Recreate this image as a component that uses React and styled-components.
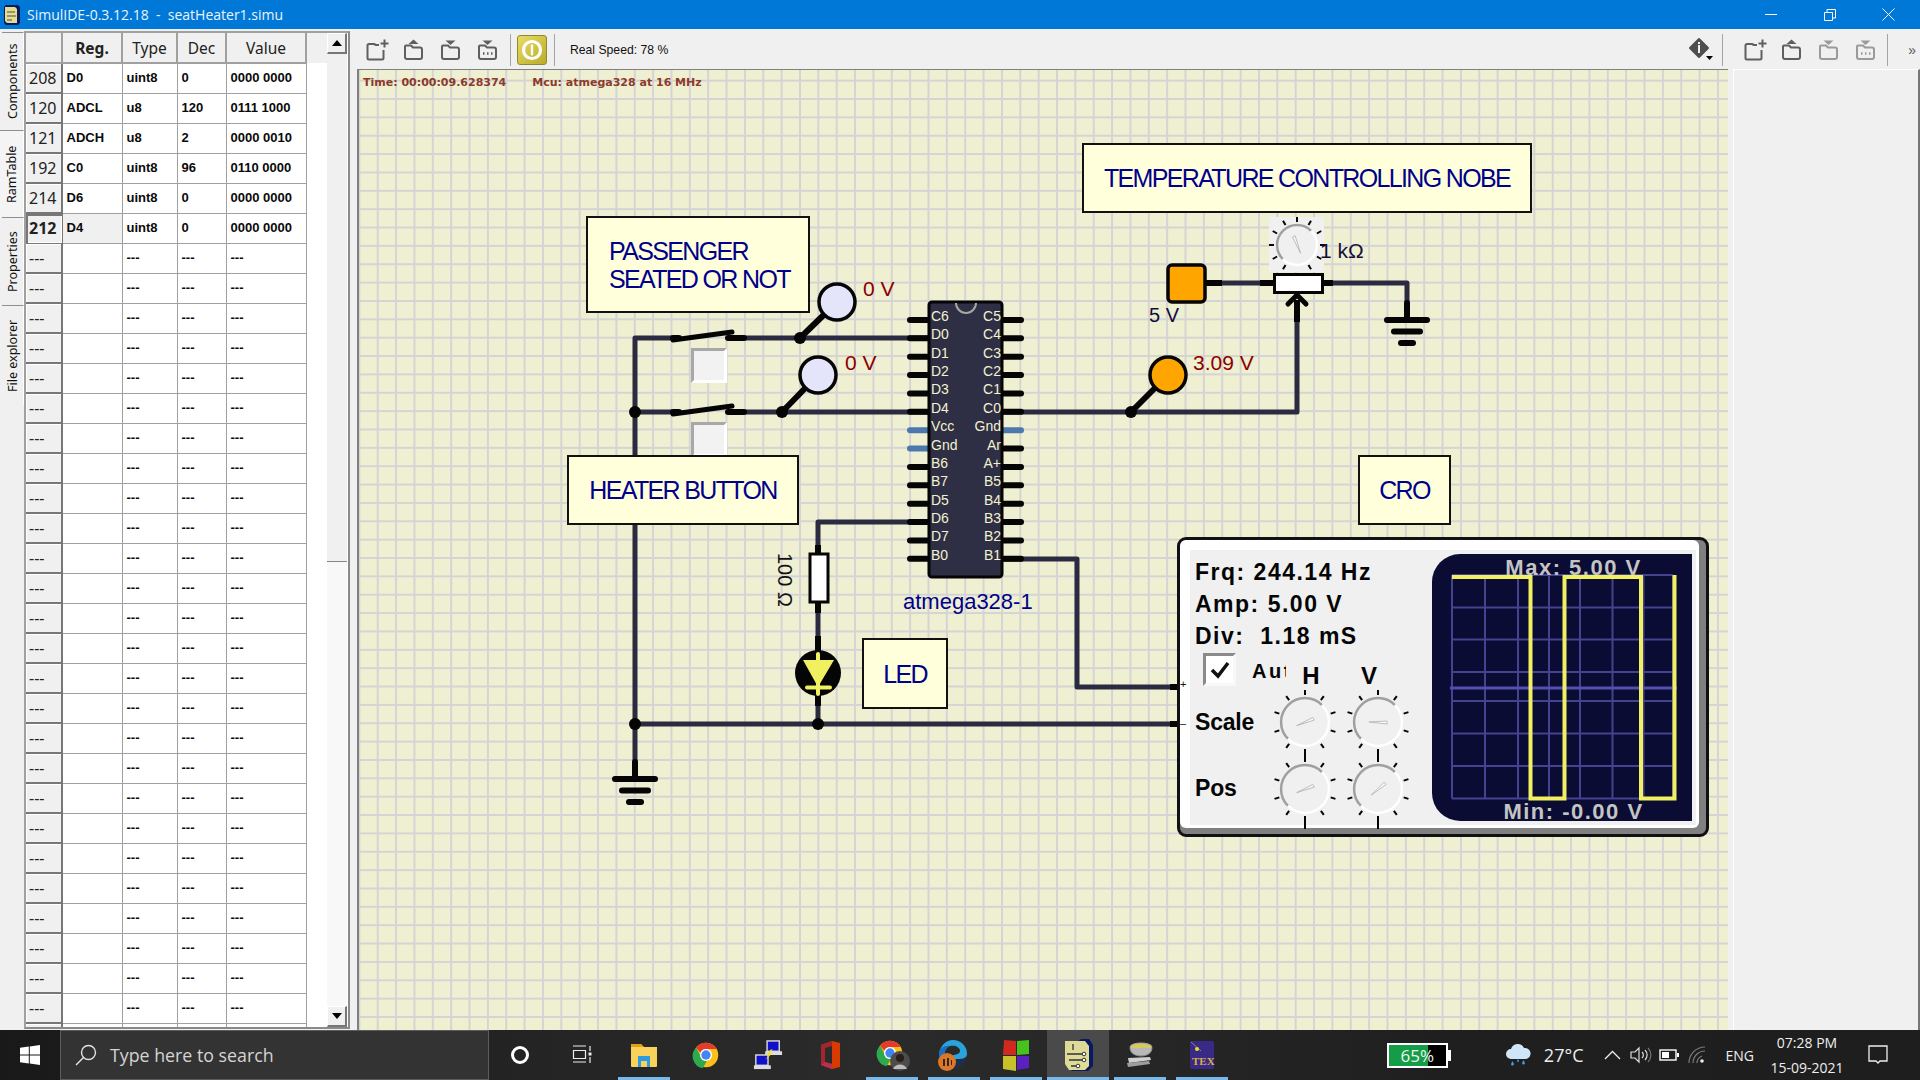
import React from "react";
import styled, { createGlobalStyle } from "styled-components";

const GlobalStyle = createGlobalStyle`
  html, body { margin: 0; padding: 0; height: 100%; overflow: hidden; background: #f0f0f0; }
  body { font-family: "Liberation Sans", Arial, sans-serif; }
  * { box-sizing: border-box; }
`;

/* canvas origin in page coordinates, nodes are given in page pixels */
const CX = 357;
const CY = 70;

const Screen = styled.div`
  width: 1920px;
  height: 1080px;
  display: flex;
  flex-direction: column;
  overflow: hidden;
`;

const TitleBar = styled.div`
  height: 29px;
  flex: none;
  background: #0078d7;
  display: flex;
  align-items: center;
  color: #fff;
  padding-left: 3px;
`;

const TitleText = styled.span`
  font-family: "Open Sans", sans-serif;
  font-size: 14px;
  margin-left: 6px;
  white-space: pre;
  color: #eaf4fc;
`;

const WindowButtons = styled.div`
  margin-left: auto;
  display: flex;
  align-items: center;
  height: 100%;
  margin-right: 2px;
`;

const WindowButton = styled.div`
  width: 59px;
  height: 100%;
  display: flex;
  align-items: center;
  justify-content: center;
`;

const Main = styled.div`
  flex: 1;
  display: flex;
  min-height: 0;
`;

const SidePanel = styled.div`
  width: 357px;
  flex: none;
  display: flex;
  background: #f0f0f0;
`;

const DockTabs = styled.div`
  width: 24px;
  flex: none;
  padding-top: 3px;
  display: flex;
  flex-direction: column;
`;

const DockTab = styled.div`
  height: ${({ $h }) => $h}px;
  width: ${({ $active }) => ($active ? 24 : 22)}px;
  margin-left: ${({ $active }) => ($active ? 0 : 2)}px;
  background: ${({ $active }) => ($active ? "#f4f4f4" : "#f0f0f0")};
  border-left: 1px solid #fff;
  border-bottom: 1px solid #8f8f8f;
  display: flex;
  align-items: center;
  justify-content: center;
  writing-mode: vertical-rl;
  transform: rotate(180deg);
  font-family: "Noto Sans", sans-serif;
  font-size: 12.5px;
  color: #111;
`;

const DockFrame = styled.div`
  width: 326px;
  margin: 2px 0 1px 0;
  border: 2px solid #fff;
  border-left-color: #a0a0a0;
  border-top-color: #a0a0a0;
  border-right-color: #8a8a8a;
  border-bottom-color: #8a8a8a;
  display: flex;
  background: #fff;
`;

const TableClip = styled.div`
  width: 301px;
  overflow: hidden;
  background: linear-gradient(#f0f0f0 30px, #fff 30px);
`;

const RamGrid = styled.table`
  border-collapse: collapse;
  table-layout: fixed;
  width: 280px;
  font-size: 13px;
  background: #fff;
`;

const HeadCell = styled.th`
  height: 30px;
  background: #f0f0f0;
  border: 1px solid #a0a0a0;
  border-top: none;
  border-left: none;
  box-shadow: inset -1px -1px 0 #a0a0a0;
  font-family: "Noto Sans", sans-serif;
  font-size: 15.5px;
  color: #222;
  font-weight: ${({ $bold }) => ($bold ? 700 : 400)};
  padding: 0;
`;

const RowHead = styled.td`
  height: 30px;
  padding: 0 0 0 3px;
  background: #f0f0f0;
  border: 1px solid #777;
  border-top-color: #a0a0a0;
  border-left: none;
  box-shadow: ${({ $cur }) => ($cur ? "inset 2px 2px 0 #777, inset -1px -1px 0 #fff" : "inset -1px -1px 0 #777, inset 1px 1px 0 #fff")};
  font-family: "Noto Sans", sans-serif;
  font-size: 16px;
  font-weight: ${({ $cur }) => ($cur ? 700 : 400)};
  color: #222;
`;

const Cell = styled.td`
  height: 30px;
  padding: 0 0 2px 4px;
  border: 1px solid #a0a0a0;
  font-weight: 700;
  font-size: 13px;
  color: #0a0a0a;
  background: ${({ $cur }) => ($cur ? "#f0f0f0" : "#fff")};
  white-space: nowrap;
`;

const ScrollBar = styled.div`
  width: 20px;
  flex: none;
  display: flex;
  flex-direction: column;
  background: #f0f0f0;
`;

const ScrollButton = styled.div`
  height: 21px;
  flex: none;
  background: #f0f0f0;
  border: 1px solid #fff;
  border-right: 2px solid #777;
  border-bottom: 2px solid #777;
  display: flex;
  align-items: center;
  justify-content: center;
`;

const ScrollThumb = styled.div`
  height: 508px;
  flex: none;
  background: #f0f0f0;
  border-bottom: 1px solid #888;
`;

const ScrollTrack = styled.div`
  flex: 1;
  background-color: #f8f8f8;
  background-image: radial-gradient(#e4e4e4 0.5px, transparent 0.6px);
  background-size: 2px 2px;
`;

const Workspace = styled.div`
  flex: 1;
  display: flex;
  flex-direction: column;
  min-width: 0;
`;

const ToolBar = styled.div`
  height: 40px;
  flex: none;
  background: #f0f0f0;
  display: flex;
  align-items: center;
  padding: 1px 0 0 1px;
`;

const ToolIcon = styled.div`
  width: 37px;
  height: 30px;
  flex: none;
  display: flex;
  align-items: center;
  justify-content: center;
`;

const ToolSep = styled.div`
  width: 1px;
  height: 32px;
  flex: none;
  background: #a4a4a4;
  margin: ${({ $m }) => $m || "0"};
`;

const PowerButton = styled.div`
  width: 30px;
  height: 30px;
  flex: none;
  margin: 0 7px 0 6px;
  border-radius: 3px;
  border: 1px solid #8f8a30;
  background: linear-gradient(135deg, #e9dc62, #b9ab2a);
  display: flex;
  align-items: center;
  justify-content: center;
`;

const SpeedLabel = styled.span`
  font-size: 12.200px;
  margin-left: 15px;
  color: #111;
`;

const OverflowMark = styled.span`
  font-size: 14px;
  margin: 0 4px 0 20px;
  color: #555;
`;

const ToolSpacer = styled.div`
  flex: 1;
`;

const WorkRow = styled.div`
  flex: 1;
  display: flex;
  min-height: 0;
`;

const Canvas = styled.div`
  position: relative;
  width: 1371px;
  flex: none;
  overflow: hidden;
  border-top: 1px solid #808080;
  background-color: #efefd2;
  background-image:
    linear-gradient(to right, #d5d3d3 2px, transparent 2px),
    linear-gradient(to bottom, #d5d3d3 2px, transparent 2px);
  background-size: 18.37px 18.37px;
  background-position: 1.4px 9.7px;
  box-shadow: inset 2px 0 0 #808080;
`;

const RightColumn = styled.div`
  flex: 1;
  background: #f0f0f0;
  padding: 0 0 0 5px;
`;

const RightPane = styled.div`
  height: 100%;
  background: #f0f0f0;
  border-top: 1px solid #fff;
  border-left: 1px solid #fff;
  border-right: 2px solid #777;
`;

const StatusLine = styled.div`
  position: absolute;
  left: 6px;
  top: 6px;
  display: flex;
  gap: 26px;
  font-family: "DejaVu Sans", sans-serif;
  font-weight: 700;
  font-size: 11px;
  color: #8c3a2a;
  white-space: nowrap;
`;

const Wiring = styled.svg`
  position: absolute;
  left: 0;
  top: 0;
`;

const Note = styled.div`
  position: absolute;
  left: ${({ $x }) => $x - CX}px;
  top: ${({ $y }) => $y - CY}px;
  width: ${({ $w }) => $w}px;
  height: ${({ $h }) => $h}px;
  background: #ffffdc;
  border: 2px solid #111;
  color: #00008b;
  font-size: 25px;
  line-height: 28px;
  letter-spacing: -1.65px;
  padding-left: ${({ $pad }) => $pad || 0}px;
  display: flex;
  flex-direction: column;
  justify-content: center;
  align-items: ${({ $pad }) => ($pad ? "flex-start" : "center")};
  white-space: nowrap;
`;

const SwitchKey = styled.div`
  position: absolute;
  left: ${691 - CX}px;
  top: ${({ $y }) => $y - CY}px;
  width: 36px;
  height: 35px;
  background: #f2f2f2;
  border: 3px solid #fff;
  border-top-color: #a8a8a8;
  border-left-color: #a8a8a8;
`;

const ScopeFrame = styled.div`
  position: absolute;
  left: ${1177 - CX}px;
  top: ${537 - CY}px;
  width: 532px;
  height: 300px;
  border: 3px solid #111;
  border-radius: 9px;
  background: #808080;
  padding: 0 7px 6px 0;
`;

const ScopeBody = styled.div`
  position: relative;
  height: 100%;
  background: #fff;
  border-radius: 6px;
  padding: 10px 3px 3px 10px;
`;

const ScopeInner = styled.div`
  height: 100%;
  background: #f0f0f0;
  display: flex;
  color: #050505;
  font-weight: 700;
`;

const ScopeControls = styled.div`
  width: 242px;
  flex: none;
  padding: 6px 0 0 5px;
`;

const InputMark = styled.span`
  position: absolute;
  left: 0;
  top: ${({ $y }) => $y}px;
  font-size: 11px;
  line-height: 11px;
  font-weight: 400;
  color: #111;
`;

const Readout = styled.div`
  height: 32px;
  line-height: 32px;
  font-size: 23px;
  letter-spacing: 1.5px;
  white-space: pre;
`;

const AxisRow = styled.div`
  display: flex;
  align-items: flex-start;
  height: 37px;
`;

const AutoCheck = styled.div`
  width: 33px;
  height: 33px;
  margin: 1px 0 0 8px;
  background: #fff;
  border: 3px solid #f8f8f8;
  border-top-color: #8a8a8a;
  border-left-color: #8a8a8a;
  display: flex;
  align-items: center;
  justify-content: center;
`;

const AutoLabel = styled.div`
  width: 34px;
  margin-left: 16px;
  overflow: hidden;
  font-size: 20px;
  line-height: 38px;
  letter-spacing: 2.5px;
`;

const AxisLetter = styled.div`
  width: 24px;
  margin-left: ${({ $m }) => $m}px;
  text-align: center;
  font-size: 24px;
  line-height: 48px;
`;

const KnobRow = styled.div`
  display: flex;
  align-items: center;
  height: ${({ $h }) => $h}px;
`;

const KnobLabel = styled.div`
  width: 73px;
  font-size: 23px;
  letter-spacing: -0.2px;
`;

const KnobSlot = styled.div`
  width: 73px;
  height: 66px;
  display: flex;
  align-items: center;
  justify-content: center;
`;

const ScopeScreen = styled.svg`
  flex: none;
  margin-top: 4px;
`;

const TaskBar = styled.div`
  height: 50px;
  flex: none;
  display: flex;
  align-items: stretch;
  background: linear-gradient(to right, #191919, #232323 25%, #2b2b2b 45%, #262626 60%, #1f1f1f 75%, #1e1e1e);
  color: #f0f0f0;
  position: relative;
`;

const StartButton = styled.div`
  width: 60px;
  flex: none;
  display: flex;
  align-items: center;
  justify-content: center;
`;

const SearchBox = styled.div`
  width: 429px;
  flex: none;
  background: #333;
  border: 1px solid #5c5c5c;
  display: flex;
  align-items: center;
  padding-left: 14px;
  font-family: "Open Sans", sans-serif;
  font-size: 17.8px;
  color: #d4d4d4;
  gap: 13px;
`;

const TaskSlot = styled.div`
  width: 62px;
  flex: none;
  display: flex;
  align-items: center;
  justify-content: center;
  position: relative;
  background: ${({ $focus }) => ($focus ? "#4a4a4a" : "transparent")};
  &::after {
    content: "";
    position: absolute;
    left: ${({ $focus }) => ($focus ? 0 : 5)}px;
    right: ${({ $focus }) => ($focus ? 0 : 5)}px;
    bottom: 0;
    height: 3px;
    background: ${({ $open }) => ($open ? "#76b9ed" : "transparent")};
  }
`;

const Tray = styled.div`
  margin-left: auto;
  display: flex;
  align-items: center;
  font-family: "Open Sans", sans-serif;
  padding-right: 16px;
`;

const BatteryWidget = styled.div`
  width: 61px;
  height: 25px;
  border: 2px solid #fff;
  background: linear-gradient(to right, #149c47 0 68%, #000 68%);
  display: flex;
  align-items: center;
  justify-content: center;
  font-size: 17px;
  color: #f0f8f0;
  position: relative;
  &::after {
    content: "";
    position: absolute;
    right: -5px;
    top: 5px;
    width: 3px;
    height: 11px;
    background: #fff;
  }
`;

const TrayText = styled.span`
  font-size: ${({ $s }) => $s || 14}px;
  margin: ${({ $m }) => $m || "0"};
  color: #eee;
  white-space: nowrap;
`;

const TrayIcon = styled.div`
  width: 28px;
  flex: none;
  margin: ${({ $m }) => $m || "0"};
  display: flex;
  justify-content: center;
  align-items: center;
`;

const Clock = styled.div`
  width: 90px;
  margin-left: 8px;
  text-align: center;
  font-size: 14px;
  line-height: 25px;
  color: #eee;
`;

const NotifySlot = styled.div`
  width: 52px;
  display: flex;
  justify-content: center;
`;

const BadgedIcon = styled.div`
  position: relative;
  width: 32px;
  height: 32px;
`;

const Badge = styled.svg`
  position: absolute;
  bottom: 0;
  ${({ $side }) => ($side === "left" ? "left: 0;" : "right: -2px;")}
`;

/* ---- data ---- */

const ramRows = [
  ["208", "D0", "uint8", "0", "0000 0000"],
  ["120", "ADCL", "u8", "120", "0111 1000"],
  ["121", "ADCH", "u8", "2", "0000 0010"],
  ["192", "C0", "uint8", "96", "0110 0000"],
  ["214", "D6", "uint8", "0", "0000 0000"],
  ["212", "D4", "uint8", "0", "0000 0000"],
];
const emptyRows = Array.from({ length: 26 }, () => ["---", "", "---", "---", "---"]);
// last row only peeks out below the frame
const allRows = [...ramRows, ...emptyRows, ["", "", "", "", ""]];

const leftPins = ["C6", "D0", "D1", "D2", "D3", "D4", "Vcc", "Gnd", "B6", "B7", "D5", "D6", "D7", "B0"];
const rightPins = ["C5", "C4", "C3", "C2", "C1", "C0", "Gnd", "Ar", "A+", "B5", "B4", "B3", "B2", "B1"];
const pinY = (i) => 320 + i * 18.37;

const WIRE = "#2a2a40";
const INK = "#050505";

/* ---- drawings ---- */

function Folder({ kind, color = "#5f5f5f" }) {
  return (
    <svg width="24" height="24" viewBox="0 0 24 24" fill="none" stroke={color} strokeWidth="2" strokeLinejoin="round">
      {kind === "new" ? (
        <>
          <path d="M14 7h-3l-2-1H4a1.500 1.500 0 0 0-1.500 1.500V20a1.500 1.500 0 0 0 1.500 1.500h13a1.500 1.500 0 0 0 1.500-1.500V12" />
          <path d="M19.500 1.500v8M15.500 5.500h8" />
        </>
      ) : (
        <path d="M4 8h5l2 2h7a2 2 0 0 1 2 2v7.500a2 2 0 0 1-2 2H5a2 2 0 0 1-2-2V9a1 1 0 0 1 1-1z" transform="translate(0 -.5)" />
      )}
      {kind === "open" && <path d="M11.500 1.500l5 4.500h-10z" fill={color} stroke="none" />}
      {(kind === "save" || kind === "saveas") && <path d="M11.500 7l5-4.500h-10z" fill={color} stroke="none" />}
      {kind === "saveas" && <path d="M7 15.500h1.500M11 15.500h1.500M15 15.500h1.500" strokeWidth="2.400" />}
    </svg>
  );
}

function Ground({ x, y }) {
  return (
    <g stroke={INK} strokeLinecap="round">
      <path d={`M${x} ${y - 17}V${y}`} strokeWidth="6" />
      <path d={`M${x - 20} ${y}h40`} strokeWidth="6" />
      <path d={`M${x - 13} ${y + 11.5}h26`} strokeWidth="6" />
      <path d={`M${x - 6} ${y + 23}h12`} strokeWidth="6" />
    </g>
  );
}

function Probe({ x, y, cx, cy, fill }) {
  return (
    <g>
      <path d={`M${x} ${y}L${cx} ${cy}`} stroke={INK} strokeWidth="6" />
      <circle cx={x} cy={y} r="6" fill={INK} />
      <circle cx={cx} cy={cy} r="18" fill={fill} stroke={INK} strokeWidth="3.5" />
    </g>
  );
}

function Switch({ y }) {
  return (
    <g stroke={INK} strokeLinecap="round">
      <path d={`M673 ${y + 2}L732 ${y - 6}`} strokeWidth="5" />
      <path d={`M673 ${y}h6`} strokeWidth="6" />
      <path d={`M728 ${y}h16`} strokeWidth="6" />
    </g>
  );
}

function KnobTicks({ r, angles, long }) {
  return angles.map((a) => {
    const t = (a * Math.PI) / 180;
    const s = Math.sin(t);
    const c = -Math.cos(t);
    const end = long && a === 180 ? r + 16 : r + 8;
    return <line key={a} x1={s * (r + 3)} y1={c * (r + 3)} x2={s * end} y2={c * end} stroke={INK} strokeWidth="2" />;
  });
}

function KnobFace({ r, angle }) {
  const k = r * 0.7071;
  return (
    <g>
      <circle r={r} fill="#f0f0f0" />
      <path d={`M${-k} ${k}A${r} ${r} 0 0 1 ${k} ${-k}`} fill="none" stroke="#a0a0a0" strokeWidth="2.5" />
      <path d={`M${k} ${-k}A${r} ${r} 0 0 1 ${-k} ${k}`} fill="none" stroke="#fff" strokeWidth="2.5" />
      <g transform={`rotate(${angle})`}>
        <path d="M-1 9L0 -9L3 -9z" fill="#fafafa" stroke="#b4b4b4" strokeWidth=".8" />
      </g>
    </g>
  );
}

const scopeTicks = [0, 36, 72, 108, 144, 180, 216, 252, 288, 324];

function ScopeKnob({ angle }) {
  return (
    <svg width="70" height="66" viewBox="-35 -33 70 66" style={{ overflow: "visible" }}>
      <KnobTicks r={24} angles={scopeTicks} long />
      <KnobFace r={24} angle={angle} />
    </svg>
  );
}

function ScopeTrace() {
  const vs = [20, 53, 86, 117, 148, 180.5, 211.5, 241];
  const hs = [21, 53.5, 85.5, 118, 147, 179.5, 212, 244.5];
  return (
    <ScopeScreen width="260" height="267" viewBox="0 0 260 267">
      <rect x="0" y="0" width="286" height="267" rx="28" fill="#0b0c33" />
      <g stroke="#43438f" strokeWidth="2">
        {vs.map((x) => <line key={x} x1={x} x2={x} y1="21" y2="244.5" />)}
        {hs.map((y) => <line key={y} x1="20" x2="241" y1={y} y2={y} />)}
      </g>
      <line x1="18" x2="245" y1="134" y2="134" stroke="#5050b0" strokeWidth="3" />
      <g fill="#c4c4c4" fontFamily="Liberation Sans" fontWeight="700" fontSize="22" letterSpacing="1.5" textAnchor="middle">
        <text x="141.5" y="21">Max: 5.00 V</text>
        <text x="141.5" y="265">Min: -0.00 V</text>
      </g>
      <path d="M20 23H98.500V244.500H132.500V23H209V244.500H242.500V21" fill="none" stroke="#f0f060" strokeWidth="4" />
    </ScopeScreen>
  );
}

function Circuit() {
  return (
    <Wiring width="1371" height="960" viewBox={`${CX} ${CY} 1371 960`}>
      {/* dark wires */}
      <g fill="none" stroke={WIRE} strokeWidth="5" strokeLinejoin="round">
        <path d="M672 338H635V762" />
        <path d="M635 412H672" />
        <path d="M745 338H908" />
        <path d="M745 412H908" />
        <path d="M908 522H818V545" />
        <path d="M818 612V636" />
        <path d="M818 696V724" />
        <path d="M635 724H1170" />
        <path d="M1023 412H1297V322" />
        <path d="M1023 559H1077V687H1170" />
        <path d="M1222 283H1260" />
        <path d="M1333 283H1407V303" />
      </g>
      <path d="M1170 687h10M1170 724h10" stroke={INK} strokeWidth="6" />

      <Switch y={338} />
      <Switch y={412} />
      <circle cx="635" cy="412" r="6" fill={INK} />
      <circle cx="635" cy="724" r="6" fill={INK} />
      <circle cx="818" cy="724" r="6" fill={INK} />

      <Probe x={800} y={338} cx={837} cy={302} fill="#e4e4fb" />
      <Probe x={782} y={412} cx={818} cy={375} fill="#e4e4fb" />
      <Probe x={1131} y={412} cx={1168} cy={375} fill="#ffa500" />

      <g fontFamily="Liberation Sans" fontSize="21" fill="#8b0000">
        <text x="863" y="296">0 V</text>
        <text x="845" y="370">0 V</text>
        <text x="1193" y="370">3.09 V</text>
      </g>

      {/* atmega */}
      <g strokeLinecap="round" strokeWidth="6">
        {leftPins.map((p, i) => (
          <line key={p} x1="910" x2="930" y1={pinY(i)} y2={pinY(i)} stroke={p === "Vcc" || p === "Gnd" ? "#4b79ad" : INK} />
        ))}
        {rightPins.map((p, i) => (
          <line key={p} x1="1001" x2="1021" y1={pinY(i)} y2={pinY(i)} stroke={p === "Gnd" ? "#4b79ad" : INK} />
        ))}
      </g>
      <path d="M908 338h22M908 412h22M908 522h22M1001 412h22M1001 559h22" stroke={INK} strokeWidth="5" />
      <rect x="929" y="302" width="73" height="275" rx="3" fill="#2e2e44" stroke={INK} strokeWidth="3" />
      <path d="M956 303a10 10 0 0 0 20 0" fill="none" stroke="#a8a8a0" strokeWidth="2" />
      <g fontFamily="Liberation Sans" fontSize="14" fill="#f2f2d0">
        {leftPins.map((p, i) => <text key={p} x="931" y={pinY(i) + 1}>{p}</text>)}
        {rightPins.map((p, i) => <text key={p} x="1001" y={pinY(i) + 1} textAnchor="end">{p}</text>)}
      </g>
      <text x="903" y="609" fontFamily="Liberation Sans" fontSize="22" fill="#00008b">atmega328-1</text>

      {/* series resistor and led */}
      <path d="M818 545V553M818 603V613M818 636V652M818 694V706" stroke={INK} strokeWidth="6" />
      <rect x="810" y="554" width="18" height="48" fill="#fff" stroke={INK} strokeWidth="3" />
      <text transform="translate(778 553) rotate(90)" fontFamily="Liberation Sans" fontSize="20" fill="#111">100 Ω</text>
      <circle cx="818" cy="673" r="23" fill={INK} />
      <path d="M803 660H834L818 687z" fill="#f0f060" />
      <path d="M818 654V694M807 687.5H830" stroke="#f0f060" strokeWidth="4" strokeLinecap="round" />

      {/* supply and pot */}
      <rect x="1168" y="265" width="37" height="37" rx="4" fill="#ffa500" stroke={INK} strokeWidth="3.5" />
      <text x="1149" y="322" fontFamily="Liberation Sans" fontSize="20" fill="#10103a">5 V</text>
      <path d="M1206 283h16M1260 283h13M1323 283h10" stroke={INK} strokeWidth="6" />
      <rect x="1269" y="217" width="55" height="55" fill="#f0f0f0" />
      <g transform="translate(1297 245)">
        <KnobTicks r={20} angles={[0, 30, 60, 90, 120, 150, 210, 240, 270, 300, 330]} />
        <KnobFace r={20} angle={-30} />
      </g>
      <text x="1320" y="258" fontFamily="Liberation Sans" fontSize="21" fill="#10103a">1 kΩ</text>
      <rect x="1274.5" y="274.5" width="48" height="18" fill="#fff" stroke={INK} strokeWidth="3" />
      <path d="M1297 322V300" stroke={INK} strokeWidth="6" />
      <path d="M1288 304L1297 295L1306 304" fill="none" stroke={INK} strokeWidth="5" strokeLinecap="round" strokeLinejoin="round" />

      <Ground x={1407} y={320} />
      <Ground x={635} y={779} />
    </Wiring>
  );
}

function TitleLogo() {
  return (
    <svg width="18" height="22" viewBox="0 0 18 22">
      <path d="M3 1h12l2 2v16l-2 2H3L1 19V3z" fill="#0a1a60" />
      <path d="M2 3h10l2 2v14H4l-2-2z" fill="#e3dd90" />
      <path d="M4 8h8M4 12h9M4 16h5" stroke="#4a4a4a" strokeWidth="1" />
    </svg>
  );
}

function ChromeIcon() {
  return (
    <svg width="28" height="28" viewBox="0 0 24 24">
      <circle cx="12" cy="12" r="10.5" fill="#fbc116" />
      <path d="M12 1.500A10.500 10.500 0 0 1 21.100 6.800H12a5.200 5.200 0 0 0-4.800 3.200L3.500 5.800A10.500 10.500 0 0 1 12 1.500z" fill="#e33b2e" />
      <path d="M3.500 5.800l3.900 7a5.200 5.200 0 0 0 5.300 4.300l-3.500 6.300A10.500 10.500 0 0 1 3.500 5.800z" fill="#2da94f" />
      <circle cx="12" cy="12" r="5.2" fill="#fff" />
      <circle cx="12" cy="12" r="4" fill="#4286f5" />
    </svg>
  );
}

function ExplorerIcon() {
  return (
    <svg width="28" height="26" viewBox="0 0 28 26">
      <path d="M1 2h10l3 3h13v19a1 1 0 0 1-1 1H2a1 1 0 0 1-1-1z" fill="#f9d25c" />
      <path d="M1 2h10l2 3H1z" fill="#e2a20f" />
      <path d="M8 14h12v11h-3v-6h-6v6H8z" fill="#2f9ae0" />
    </svg>
  );
}

function NetworkIcon() {
  return (
    <svg width="30" height="32" viewBox="0 0 32 34">
      <rect x="15" y="2" width="13" height="11" fill="#1010c8" stroke="#ddd" strokeWidth="1.5" />
      <rect x="13" y="13" width="18" height="4" fill="#ddd" />
      <rect x="3" y="17" width="13" height="11" fill="#1010c8" stroke="#ddd" strokeWidth="1.5" />
      <rect x="1" y="28" width="18" height="4" fill="#ddd" />
      <path d="M19 11l-5 6 3 0-4 5 8-7-3 0 3-4z" fill="#f4e020" />
    </svg>
  );
}

function OfficeIcon() {
  return (
    <svg width="24" height="30" viewBox="0 0 24 30">
      <path d="M14 1L3 5v20l11 4 8-2V3z" fill="#d83b01" />
      <path d="M3 5l11-4v5L7 8v14l7 2v5L3 25z" fill="#a4262c" />
      <path d="M7 8l7-2v18l-7-2z" fill="#2b2b2b" />
      <path d="M3 25l4-3 7 2v5z" fill="#b7314f" />
    </svg>
  );
}

function ProfileChrome() {
  return (
    <BadgedIcon>
      <ChromeIcon />
      <Badge width="20" height="20" viewBox="0 0 20 20">
        <circle cx="10" cy="10" r="10" fill="#4c4c4c" />
        <circle cx="10" cy="7" r="4" fill="#2a1c18" />
        <path d="M3 18c2-6 12-6 14 0z" fill="#bcbcbc" />
      </Badge>
    </BadgedIcon>
  );
}

function EdgeIcon() {
  return (
    <BadgedIcon>
      <svg width="30" height="30" viewBox="0 0 30 30">
        <path d="M15 1a14 14 0 0 1 14 14c0 4-4 5-9 5h-8c0-6 10-3 10-8C22 8 17 6 12 7 6 8 2 12 1 15 2 7 8 1 15 1z" fill="#2aa3dc" />
        <path d="M1 15c0-6 6-9 11-8-4 2-6 6-5 11 1 6 6 10 11 11C9 30 1 24 1 15z" fill="#1b6fc0" />
        <path d="M12 20h16c-1 5-5 9-10 9-4-1-7-5-6-9z" fill="#1f2e4a" />
      </svg>
      <Badge $side="left" width="18" height="18" viewBox="0 0 18 18">
        <circle cx="9" cy="9" r="9" fill="#d9782a" />
        <path d="M5 6h2v7H5zM9 5h2v8H9zM13 7h1v5h-1z" fill="#3c2414" />
      </Badge>
    </BadgedIcon>
  );
}

function ColorTiles() {
  return (
    <svg width="28" height="34" viewBox="0 0 28 34">
      <path d="M2 2l12 1v14H1z" fill="#d02a20" />
      <path d="M15 3l12-1v14l-12 1z" fill="#46c11e" />
      <path d="M1 18h13v15l-13-2z" fill="#c8c22a" />
      <path d="M15 18h12v12l-12 2z" fill="#5a20c0" />
    </svg>
  );
}

function SimulIcon() {
  return (
    <svg width="30" height="34" viewBox="0 0 30 34">
      <path d="M18 1h8l4 6v21l-5 5H8l6-4V4z" fill="#0a1a60" />
      <path d="M2 3h20l4 5v20l-4 4H6l-4-6z" fill="#dedb98" />
      <path d="M10 6v6M4 16h16M6 22h14M8 28h8" stroke="#333" strokeWidth="1.3" fill="none" />
      <circle cx="21" cy="16" r="1.8" fill="#fff" stroke="#333" />
      <circle cx="21" cy="22" r="1.8" fill="#fff" stroke="#333" />
      <circle cx="15" cy="28" r="1.8" fill="#fff" stroke="#333" />
    </svg>
  );
}

function StackIcon() {
  return (
    <svg width="30" height="30" viewBox="0 0 30 30">
      <ellipse cx="16" cy="7" rx="11" ry="4" fill="#d8c860" stroke="#aaa" />
      <path d="M5 8c0 5 5 8 11 8s11-3 11-8" fill="#b8b8b8" stroke="#888" />
      <path d="M3 18l22-1 1 3L4 23z" fill="#cfcfcf" />
      <path d="M2 23l22-2 1 3-22 3z" fill="#9e9e9e" />
    </svg>
  );
}

function TexIcon() {
  return (
    <svg width="26" height="30" viewBox="0 0 26 30">
      <rect x="1" y="1" width="24" height="28" rx="2" fill="#3a2a88" />
      <path d="M2 2l10 9" stroke="#888" strokeWidth="1" />
      <circle cx="8" cy="9" r="2" fill="#e8e020" />
      <text x="3" y="25" fontFamily="Liberation Serif" fontSize="11" fontWeight="700" fill="#d8b040">TEX</text>
    </svg>
  );
}

function WeatherIcon() {
  return (
    <svg width="28" height="26" viewBox="0 0 28 26">
      <path d="M7 17a5 5 0 0 1 0-10 7 7 0 0 1 13-1 5.500 5.500 0 0 1 2 11z" fill="#cfe6f8" />
      <path d="M7 22l1.500-3 1.500 3a1.500 1.500 0 0 1-3 0zM18 21l1.500-3 1.500 3a1.500 1.500 0 0 1-3 0z" fill="#3d9be0" />
      <path d="M13 19l1-2 1 2a1 1 0 0 1-2 0z" fill="#3d9be0" />
    </svg>
  );
}

export default function App() {
  const folders = ["new", "open", "save", "saveas"];
  return (
    <Screen>
      <GlobalStyle />
      <TitleBar>
        <TitleLogo />
        <TitleText>SimulIDE-0.3.12.18  -  seatHeater1.simu</TitleText>
        <WindowButtons>
          <WindowButton>
            <svg width="12" height="2"><rect width="12" height="1" fill="#fff" /></svg>
          </WindowButton>
          <WindowButton>
            <svg width="12" height="12" fill="none" stroke="#fff"><path d="M.5 3.500h8v8h-8zM3 3.500V.5h8.500v8.500H8.500" /></svg>
          </WindowButton>
          <WindowButton>
            <svg width="13" height="13" stroke="#fff"><path d="M.5.5l12 12M12.500.5l-12 12" /></svg>
          </WindowButton>
        </WindowButtons>
      </TitleBar>

      <Main>
        <SidePanel>
          <DockTabs>
            <DockTab $h={98}>Components</DockTab>
            <DockTab $h={87} $active>RamTable</DockTab>
            <DockTab $h={88}>Properties</DockTab>
            <DockTab $h={100}>File explorer</DockTab>
          </DockTabs>
          <DockFrame>
            <TableClip>
              <RamGrid>
                <colgroup>
                  <col width="36" /><col width="60" /><col width="55" /><col width="49" /><col width="80" />
                </colgroup>
                <thead>
                  <tr>
                    <HeadCell />
                    <HeadCell $bold>Reg.</HeadCell>
                    <HeadCell>Type</HeadCell>
                    <HeadCell>Dec</HeadCell>
                    <HeadCell>Value</HeadCell>
                  </tr>
                </thead>
                <tbody>
                  {allRows.map((r, i) => (
                    <tr key={i}>
                      <RowHead $cur={i === 5}>{r[0]}</RowHead>
                      <Cell $cur={i === 5}>{r[1]}</Cell>
                      <Cell>{r[2]}</Cell>
                      <Cell>{r[3]}</Cell>
                      <Cell>{r[4]}</Cell>
                    </tr>
                  ))}
                </tbody>
              </RamGrid>
            </TableClip>
            <ScrollBar>
              <ScrollButton>
                <svg width="10" height="6"><path d="M5 0l5 6H0z" fill="#000" /></svg>
              </ScrollButton>
              <ScrollThumb />
              <ScrollTrack />
              <ScrollButton>
                <svg width="10" height="6"><path d="M5 6l5-6H0z" fill="#000" /></svg>
              </ScrollButton>
            </ScrollBar>
          </DockFrame>
        </SidePanel>

        <Workspace>
          <ToolBar>
            {folders.map((k) => <ToolIcon key={k}><Folder kind={k} /></ToolIcon>)}
            <ToolSep $m="0 0 0 4px" />
            <PowerButton>
              <svg width="24" height="24" viewBox="0 0 24 24" fill="none">
                <circle cx="12" cy="12" r="8.500" stroke="#fff" strokeWidth="3.200" />
                <rect x="10.800" y="6.500" width="2.400" height="11" rx="1" fill="#fff" />
              </svg>
            </PowerButton>
            <ToolSep />
            <SpeedLabel>Real Speed: 78 %</SpeedLabel>
            <ToolSpacer />
            <ToolIcon>
              <svg width="26" height="26" viewBox="0 0 26 26">
                <path d="M11 2l9 9-9 9-9-9z" fill="#4f4f4f" stroke="#4f4f4f" strokeLinejoin="round" strokeWidth="2" />
                <rect x="10" y="5" width="2" height="2" fill="#f0f0f0" />
                <rect x="10" y="8" width="2" height="8" fill="#f0f0f0" />
                <path d="M18 19h7l-3.500 4z" fill="#000" />
              </svg>
            </ToolIcon>
            <ToolSep $m="0 13px 0 3px" />
            <ToolIcon><Folder kind="new" /></ToolIcon>
            <ToolIcon><Folder kind="open" /></ToolIcon>
            <ToolIcon><Folder kind="save" color="#9a9a9a" /></ToolIcon>
            <ToolIcon><Folder kind="saveas" color="#9a9a9a" /></ToolIcon>
            <ToolSep $m="0 0 0 3px" />
            <OverflowMark>»</OverflowMark>
          </ToolBar>
          <WorkRow>
            <Canvas>
              <StatusLine>
                <span>Time: 00:00:09.628374</span>
                <span>Mcu: atmega328 at 16 MHz</span>
              </StatusLine>
              <Circuit />
              <SwitchKey $y={348} />
              <SwitchKey $y={422} />
              <Note $x={586} $y={216} $w={224} $h={97} $pad={21}>
                <div>PASSENGER</div>
                <div>SEATED OR NOT</div>
              </Note>
              <Note $x={567} $y={455} $w={232} $h={70}>HEATER BUTTON</Note>
              <Note $x={1082} $y={143} $w={450} $h={70}>TEMPERATURE CONTROLLING NOBE</Note>
              <Note $x={1358} $y={455} $w={93} $h={70}>CRO</Note>
              <Note $x={862} $y={638} $w={86} $h={71}>LED</Note>
              <ScopeFrame>
                <ScopeBody>
                  <InputMark $y={139}>+</InputMark>
                  <InputMark $y={178}>–</InputMark>
                  <ScopeInner>
                    <ScopeControls>
                      <Readout>Frq: 244.14 Hz</Readout>
                      <Readout>Amp: 5.00 V</Readout>
                      <Readout>Div:  1.18 mS</Readout>
                      <AxisRow>
                        <AutoCheck>
                          <svg width="20" height="18" viewBox="0 0 20 18">
                            <path d="M2 9l6 6L18 2" fill="none" stroke="#111" strokeWidth="3.5" />
                          </svg>
                        </AutoCheck>
                        <AutoLabel>Auto</AutoLabel>
                        <AxisLetter $m={13}>H</AxisLetter>
                        <AxisLetter $m={34}>V</AxisLetter>
                      </AxisRow>
                      <KnobRow $h={66}>
                        <KnobLabel>Scale</KnobLabel>
                        <KnobSlot><ScopeKnob angle={60} /></KnobSlot>
                        <KnobSlot><ScopeKnob angle={84} /></KnobSlot>
                      </KnobRow>
                      <KnobRow $h={67}>
                        <KnobLabel>Pos</KnobLabel>
                        <KnobSlot><ScopeKnob angle={60} /></KnobSlot>
                        <KnobSlot><ScopeKnob angle={42} /></KnobSlot>
                      </KnobRow>
                    </ScopeControls>
                    <ScopeTrace />
                  </ScopeInner>
                </ScopeBody>
              </ScopeFrame>
            </Canvas>
            <RightColumn>
              <RightPane />
            </RightColumn>
          </WorkRow>
        </Workspace>
      </Main>

      <TaskBar>
        <StartButton>
          <svg width="20" height="20" viewBox="0 0 20 20" fill="#fff">
            <path d="M0 2.800l8.800-1.300v8H0zM9.800 1.400L20 0v9.500H9.800zM0 10.500h8.800v8L0 17.200zM9.800 10.500H20V20L9.800 18.600z" />
          </svg>
        </StartButton>
        <SearchBox>
          <svg width="22" height="22" viewBox="0 0 22 22" fill="none" stroke="#e4e4e4" strokeWidth="1.4">
            <circle cx="13.5" cy="8.5" r="7" />
            <path d="M8.500 13.500L1 21" />
          </svg>
          Type here to search
        </SearchBox>
        <TaskSlot>
          <svg width="20" height="20"><circle cx="10" cy="10" r="7.5" fill="none" stroke="#fff" strokeWidth="3" /></svg>
        </TaskSlot>
        <TaskSlot>
          <svg width="20" height="20" fill="none" stroke="#eee" strokeWidth="1.2">
            <path d="M1 1h13M1 17h13M1.500 5.500h12v8h-12z" />
            <path d="M18 1v5M18 12v6" />
            <rect x="16.5" y="7.5" width="3" height="3" fill="#eee" stroke="none" />
          </svg>
        </TaskSlot>
        <TaskSlot $open><ExplorerIcon /></TaskSlot>
        <TaskSlot><ChromeIcon /></TaskSlot>
        <TaskSlot><NetworkIcon /></TaskSlot>
        <TaskSlot><OfficeIcon /></TaskSlot>
        <TaskSlot $open><ProfileChrome /></TaskSlot>
        <TaskSlot $open><EdgeIcon /></TaskSlot>
        <TaskSlot $open><ColorTiles /></TaskSlot>
        <TaskSlot $open $focus><SimulIcon /></TaskSlot>
        <TaskSlot $open><StackIcon /></TaskSlot>
        <TaskSlot $open><TexIcon /></TaskSlot>
        <Tray>
          <BatteryWidget>65%</BatteryWidget>
          <TrayIcon $m="0 12px 0 56px"><WeatherIcon /></TrayIcon>
          <TrayText $s={18} $m="0 15px 0 0">27°C</TrayText>
          <TrayIcon>
            <svg width="17" height="10" fill="none" stroke="#eee" strokeWidth="1.3"><path d="M1 9l7.500-7.500L16 9" /></svg>
          </TrayIcon>
          <TrayIcon>
            <svg width="22" height="18" viewBox="0 0 22 18" fill="none" stroke="#ddd" strokeWidth="1.2">
              <path d="M1 6h4l4-4v14l-4-4H1z" />
              <path d="M12 6a4 4 0 0 1 0 6M15 4a7 7 0 0 1 0 10" />
              <path d="M18 2a10 10 0 0 1 0 14" stroke="#777" />
            </svg>
          </TrayIcon>
          <TrayIcon>
            <svg width="20" height="12" fill="none" stroke="#fff" strokeWidth="1.4">
              <rect x="1" y="1" width="16" height="10" />
              <rect x="3" y="3" width="7" height="6" fill="#fff" stroke="none" />
              <rect x="18" y="4" width="2" height="4" fill="#fff" stroke="none" />
            </svg>
          </TrayIcon>
          <TrayIcon>
            <svg width="18" height="18" viewBox="0 0 18 18" fill="none" stroke="#7c7c7c" strokeWidth="1.2">
              <path d="M1 17A16 16 0 0 1 17 1M5 17A12 12 0 0 1 17 5M9 17a8 8 0 0 1 5-7" />
              <circle cx="14" cy="15" r="1.8" fill="#eee" stroke="none" />
            </svg>
          </TrayIcon>
          <TrayText $s={14} $m="0 0 0 15px">ENG</TrayText>
          <Clock>
            <div>07:28 PM</div>
            <div>15-09-2021</div>
          </Clock>
          <NotifySlot>
            <svg width="20" height="20" fill="none" stroke="#eee" strokeWidth="1.3">
              <path d="M1 1h18v15h-7l-2 2-2-2H1z" />
            </svg>
          </NotifySlot>
        </Tray>
      </TaskBar>
    </Screen>
  );
}
